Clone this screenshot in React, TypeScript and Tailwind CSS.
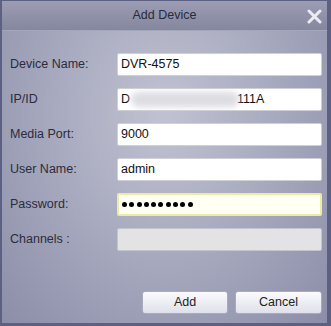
import React from "react";

const font = { fontFamily: '"Liberation Sans", Arial, sans-serif' };

const rows: { label: string; kind: "text" | "ip" | "password" | "disabled"; value?: string }[] = [
  { label: "Device Name:", kind: "text", value: "DVR-4575" },
  { label: "IP/ID", kind: "ip" },
  { label: "Media Port:", kind: "text", value: "9000" },
  { label: "User Name:", kind: "text", value: "admin" },
  { label: "Password:", kind: "password" },
  { label: "Channels :", kind: "disabled" },
];

const Field = ({ kind, value }: { kind: string; value?: string }) => {
  if (kind === "disabled") {
    return <div className="h-[23px] w-[205px] rounded-[2px] border border-[#c4c4cc] bg-[#e3e3e6]" />;
  }
  if (kind === "password") {
    return (
      <div className="flex h-[23px] w-[205px] items-center gap-[2.3px] rounded-[2px] border-2 border-[#ececa6] bg-[#fffff4] pl-[3px]">
        {Array.from({ length: 10 }).map((_, i) => (
          <span key={i} className="h-[5px] w-[5px] rounded-full bg-black" />
        ))}
      </div>
    );
  }
  if (kind === "ip") {
    return (
      <div className="flex h-[23px] w-[205px] items-center overflow-hidden rounded-[2px] border border-[#cfcfd6] bg-white pl-[3px] text-[12.5px] text-[#111]">
        <span>D</span>
        <span className="ml-[1px] h-[15px] w-[108px] rounded-full bg-[#dcdce2] blur-[3px]" />
        <span className="-ml-[2px]">111A</span>
      </div>
    );
  }
  return (
    <div className="flex h-[23px] w-[205px] items-center rounded-[2px] border border-[#cfcfd6] bg-white pl-[3px] text-[12.5px] text-[#111]">
      {value}
    </div>
  );
};

const Button = ({ children, w }: { children: React.ReactNode; w: string }) => (
  <button
    className={`flex h-[23px] ${w} items-center justify-center rounded-[3px] border border-[#a9abbd] bg-gradient-to-b from-[#fbfbfd] to-[#dfe0ea] text-[12.5px] text-[#222]`}
  >
    {children}
  </button>
);

export default function App() {
  return (
    <div
      style={font}
      className="flex h-[326px] w-[331px] flex-col border-t border-l-2 border-r-4 border-b-[3px] border-[#5c6184] bg-[radial-gradient(ellipse_at_50%_35%,#c1c2d1_0%,#a9abc0_45%,#8c8ea9_100%)]"
    >
      <div className="relative flex h-[30px] items-center justify-center border-b border-[#a4a6bb] bg-gradient-to-b from-[#9c9db5] to-[#85879f] text-[12.5px] text-[#2a2a38]">
        Add Device
        <svg
          className="absolute right-[5px] top-[8px]"
          width="15"
          height="15"
          viewBox="0 0 15 15"
        >
          <path d="M2 2 L13 13 M13 2 L2 13" stroke="#ececf2" strokeWidth="3" strokeLinecap="round" />
        </svg>
      </div>
      <div className="flex flex-1 flex-col pl-[8px] pt-[22px]">
        <div className="flex flex-col gap-3">
          {rows.map((r) => (
            <div key={r.label} className="flex items-center">
              <div className="w-[107px] text-[12.5px] text-[#2b2c3c]">{r.label}</div>
              <Field kind={r.kind} value={r.value} />
            </div>
          ))}
        </div>
        <div className="mt-[40px] flex justify-end gap-[7px] pr-[5px]">
          <Button w="w-[86px]">Add</Button>
          <Button w="w-[87px]">Cancel</Button>
        </div>
      </div>
    </div>
  );
}
